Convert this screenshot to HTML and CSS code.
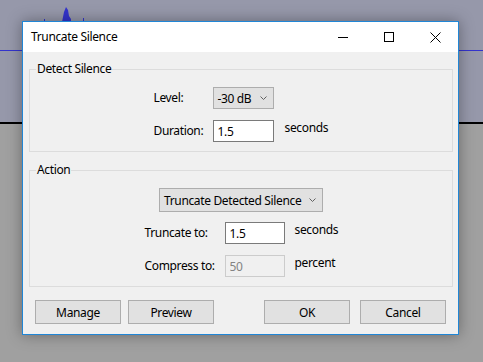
FILE: index.html
```html
<!DOCTYPE html>
<html lang="en">
<head>
    <meta charset="UTF-8">
    <title>Truncate Silence</title>
    <link rel="stylesheet" href="styles.css">
</head>
<body>
    <div class="desktop">
        <!-- audio track behind the dialog -->
        <svg class="track" width="483" height="122" viewBox="0 0 483 122">
            <rect width="483" height="122" fill="#9698aa"/>
            <rect y="50" width="483" height="1" fill="#3434cc"/>
            <rect x="44" y="19" width="1" height="4" fill="#3434cc"/>
            <rect x="83" y="18" width="1" height="4" fill="#3434cc"/>
            <polygon points="62,22 64,12 66,7 68,10 69,16 71,19 71,22" fill="#3434cc"/>
        </svg>
        <div class="track-edge"></div>
        <div class="track-below"></div>

        <div class="dialog">
            <div class="title-bar">
                <span class="title">Truncate Silence</span>
                <div class="caption-buttons">
                    <div class="caption-btn">
                        <svg width="10" height="10" viewBox="0 0 10 10"><rect x="0" y="5" width="10" height="1" fill="#000"/></svg>
                    </div>
                    <div class="caption-btn">
                        <svg width="10" height="10" viewBox="0 0 10 10"><rect x="0.5" y="0.5" width="9" height="9" fill="none" stroke="#000" stroke-width="1"/></svg>
                    </div>
                    <div class="caption-btn">
                        <svg width="11" height="11" viewBox="0 0 11 11"><path d="M0.5 0.5 L10.5 10.5 M10.5 0.5 L0.5 10.5" stroke="#000" stroke-width="1"/></svg>
                    </div>
                </div>
            </div>

            <div class="dialog-body">
                <fieldset class="group">
                    <legend>Detect Silence</legend>
                    <div class="form-grid detect">
                        <label>Level:</label>
                        <div class="choice small">
                            <span>-30 dB</span>
                            <svg width="7" height="4" viewBox="0 0 7 4"><polyline points="0.5,0.5 3.5,3.5 6.5,0.5" fill="none" stroke="#606060" stroke-width="1"/></svg>
                        </div>
                        <span></span>

                        <label for="duration">Duration:</label>
                        <input type="text" id="duration" value="1.5">
                        <span class="unit">seconds</span>
                    </div>
                </fieldset>

                <fieldset class="group">
                    <legend>Action</legend>
                    <div class="action-row">
                        <div class="choice wide">
                            <span>Truncate Detected Silence</span>
                            <svg width="7" height="4" viewBox="0 0 7 4"><polyline points="0.5,0.5 3.5,3.5 6.5,0.5" fill="none" stroke="#606060" stroke-width="1"/></svg>
                        </div>
                    </div>
                    <div class="form-grid action">
                        <label for="truncate">Truncate to:</label>
                        <input type="text" id="truncate" value="1.5">
                        <span class="unit">seconds</span>

                        <label for="compress" class="dim">Compress to:</label>
                        <input type="text" id="compress" value="50" disabled>
                        <span class="unit">percent</span>
                    </div>
                </fieldset>

                <div class="footer">
                    <button class="btn">Manage</button>
                    <button class="btn">Preview</button>
                    <span class="spacer"></span>
                    <button class="btn">OK</button>
                    <button class="btn">Cancel</button>
                </div>
            </div>
        </div>
    </div>
</body>
</html>
```

FILE: styles.css
```css
* { margin: 0; padding: 0; box-sizing: border-box; }
body { width: 483px; height: 362px; overflow: hidden; font-family: 'Noto Sans', 'Liberation Sans', sans-serif; font-size: 12px; letter-spacing: -0.35px; color: #000; white-space: nowrap; }
.desktop { position: relative; width: 483px; height: 362px; background: #a0a0a0; }
.track { display: block; }
.track-edge { height: 2px; background: #000; }
.track-below { height: 238px; background: #a0a0a0; }

.dialog { position: absolute; left: 22px; top: 21px; width: 437px; height: 314px; border: 1px solid #2086d6; background: #f0f0f0; box-shadow: 0 0 14px rgba(0,0,0,0.35); }
.title-bar { height: 30px; background: #fff; display: flex; align-items: center; }
.title { padding-left: 8px; line-height: 16px; }
.caption-buttons { margin-left: auto; display: flex; }
.caption-btn { width: 46px; height: 30px; display: flex; align-items: center; justify-content: center; }

.dialog-body { padding: 0 5px 0 6px; }
.group { margin-top: 9px; border: 1px solid #dcdcdc; padding: 10px 0 9px; min-width: 0; }
.group + .group { margin-top: 10px; }
.group legend { margin-left: 6px; padding: 0 1px; line-height: 16px; }

.form-grid { display: grid; justify-content: center; align-items: center; row-gap: 11px; }
.form-grid.detect { grid-template-columns: 59px 61px 55px; }
.form-grid.action { grid-template-columns: 80px 60px 53px; margin-top: 10px; }
.form-grid label { line-height: 16px; }
.form-grid .unit { align-self: start; padding-left: 10px; line-height: 16px; }
.form-grid.detect .unit { padding-left: 11px; }
.form-grid input { width: 100%; height: 22px; border: 1px solid #7a7a7a; background: #fff; padding: 0 4px; font: inherit; letter-spacing: inherit; color: #000; outline: none; }
.form-grid input:disabled { border-color: #cccccc; background: #f0f0f0; color: #838383; }

.choice { height: 22px; display: flex; align-items: center; justify-content: space-between; padding: 0 6px 0 4px; background: #e1e1e1; border: 1px solid #adadad; }
.choice.small { width: 61px; }
.choice.wide { width: 164px; height: 24px; }
.action-row { display: flex; justify-content: center; }

.footer { display: flex; padding: 13px 7px 0 6px; gap: 7px; }
.footer .spacer { flex: 1; }
.footer .btn:last-child { margin-left: 3px; }
.btn { width: 86px; height: 24px; background: #e1e1e1; border: 1px solid #adadad; font: inherit; letter-spacing: inherit; color: #000; }
```
